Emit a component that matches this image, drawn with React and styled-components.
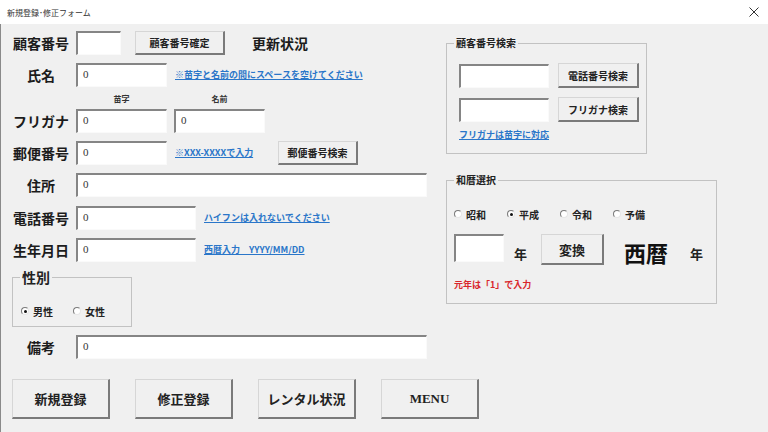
import React from 'react';
import styled, { createGlobalStyle } from 'styled-components';

const GlobalStyle = createGlobalStyle`
  html, body {
    margin: 0;
    padding: 0;
    background: #f0f0f0;
  }
  body {
    font-family: "Liberation Serif", "Noto Sans CJK JP", serif;
    color: #1a1a1a;
  }
  * {
    box-sizing: border-box;
  }
`;

const jp = `"Noto Sans CJK JP", "Liberation Serif", serif`;

const Window = styled.div`
  width: 768px;
  height: 432px;
  background: #f0f0f0;
  display: flex;
  flex-direction: column;
  overflow: hidden;
`;

const TitleBar = styled.div`
  height: 24px;
  flex: none;
  background: #ffffff;
  display: flex;
  align-items: center;
  justify-content: space-between;
  padding: 0 6px 0 7px;
`;

const TitleText = styled.span`
  font-family: ${jp};
  font-size: 8px;
  color: #333;
`;

const CloseButton = styled.span`
  display: flex;
  width: 12px;
  height: 12px;
  align-items: center;
  justify-content: center;
  margin-right: 2px;
`;

const Body = styled.div`
  flex: 1;
  border-left: 1px solid #8a8a8a;
  padding: 7px 12px 0 11px;
`;

const TopSection = styled.div`
  display: flex;
  align-items: flex-start;
`;

const LeftForm = styled.div`
  width: 415px;
  display: flex;
  flex-direction: column;
`;

const Row = styled.div`
  display: flex;
  align-items: center;
  height: ${p => p.$h || 24}px;
  margin-top: ${p => (p.$mt ?? 8)}px;
`;

const Label = styled.span`
  width: 58px;
  margin-right: 6px;
  text-align: center;
  font-family: ${jp};
  font-size: 14px;
  font-weight: 700;
  color: #1c1c1c;
  white-space: nowrap;
`;

const SubLabels = styled.div`
  display: flex;
  align-items: center;
  height: 22px;
  padding-left: 64px;
  gap: 7px;
`;

const SubLabel = styled.span`
  width: 91px;
  text-align: center;
  font-family: ${jp};
  font-size: 8px;
  font-weight: 700;
  color: #333;
`;

const TextBox = styled.div`
  width: ${p => p.$w}px;
  height: ${p => p.$h || 24}px;
  flex: none;
  background: #ffffff;
  border-style: solid;
  border-width: 2px 1px 1px 2px;
  border-color: #858585 #fafafa #fafafa #858585;
  padding: 2px 5px;
  font-family: "Liberation Serif", serif;
  font-size: 11px;
  color: #333;
  line-height: 14px;
`;

const Button = styled.button`
  width: ${p => p.$w}px;
  height: ${p => p.$h || 24}px;
  flex: none;
  margin-left: ${p => p.$ml || 0}px;
  background: #f0f0f0;
  border-style: solid;
  border-width: 1px 2px 2px 1px;
  border-color: #d6d6d6 #7a7a7a #7a7a7a #d6d6d6;
  padding: 0;
  font-family: ${jp};
  font-size: ${p => p.$fs || 10}px;
  font-weight: 700;
  color: #222;
  cursor: default;
`;

const Hint = styled.span`
  margin-left: ${p => p.$ml || 8}px;
  width: ${p => (p.$w ? `${p.$w}px` : 'auto')};
  flex: none;
  font-family: ${jp};
  font-size: 9px;
  font-weight: 700;
  color: #2a76c9;
  text-decoration: underline;
  white-space: nowrap;
  line-height: 12px;
`;

const Status = styled.span`
  margin-left: 27px;
  font-family: ${jp};
  font-size: 14px;
  font-weight: 700;
  color: #1c1c1c;
`;

const Frame = styled.fieldset`
  width: ${p => p.$w}px;
  margin: ${p => p.$m || '0'};
  padding: 0 0 0 7px;
  border: 1px solid #c2c2c2;
  min-width: 0;
`;

const Legend = styled.legend`
  padding: 0 2px;
  font-family: ${jp};
  font-size: ${p => p.$fs || 10}px;
  line-height: ${p => p.$lh || 14}px;
  font-weight: 700;
  color: #222;
`;

const FrameBody = styled.div`
  padding: ${p => p.$pad};
  display: flex;
  flex-direction: column;
`;

const RadioRow = styled.div`
  display: flex;
  align-items: center;
  height: 14px;
`;

const RadioItem = styled.label`
  width: ${p => p.$w}px;
  display: flex;
  align-items: center;
  gap: 4px;
  font-family: ${jp};
  font-size: 10px;
  font-weight: 700;
  color: #222;
`;

const RadioDot = styled.span`
  width: 8px;
  height: 8px;
  border-radius: 50%;
  border: 1px solid;
  border-color: #7a7a7a #e6e6e6 #e6e6e6 #7a7a7a;
  background: #fff;
  display: flex;
  align-items: center;
  justify-content: center;

  &::after {
    content: '';
    width: 3px;
    height: 3px;
    border-radius: 50%;
    background: ${p => (p.$on ? '#111' : 'transparent')};
  }
`;

const RightPanel = styled.div`
  margin-left: 19px;
  margin-top: 5px;
  display: flex;
  flex-direction: column;
`;

const SearchRow = styled.div`
  display: flex;
  align-items: center;
  gap: 9px;
  margin-bottom: ${p => p.$mb || 0}px;
`;

const EraRow = styled.div`
  display: flex;
  align-items: flex-start;
  margin-top: 13px;
`;

const YearMark = styled.span`
  margin-left: ${p => p.$ml}px;
  padding-top: 12px;
  font-family: ${jp};
  font-size: 13px;
  line-height: 16px;
  font-weight: 700;
  color: #222;
`;

const Seireki = styled.span`
  margin-left: 20px;
  margin-top: 5px;
  font-family: ${jp};
  font-size: 22px;
  line-height: 26px;
  font-weight: 700;
  color: #111;
`;

const Note = styled.span`
  margin-top: ${p => p.$mt || 0}px;
  font-family: ${jp};
  font-size: 9px;
  line-height: 12px;
  font-weight: 700;
  color: ${p => p.$color || '#2a76c9'};
  text-decoration: ${p => (p.$link ? 'underline' : 'none')};
  white-space: nowrap;
`;

const ActionBar = styled.div`
  display: flex;
  gap: 25px;
  margin-top: 20px;
`;

const CloseIcon = () => (
  <svg width="10" height="10" viewBox="0 0 10 10">
    <path d="M0.5 0.5 L9.5 9.5 M9.5 0.5 L0.5 9.5" stroke="#333" strokeWidth="1" />
  </svg>
);

const eras = [
  { name: '昭和', on: false },
  { name: '平成', on: true },
  { name: '令和', on: false },
  { name: '予備', on: false },
];

export default function App() {
  return (
    <>
      <GlobalStyle />
      <Window>
        <TitleBar>
          <TitleText>新規登録･修正フォーム</TitleText>
          <CloseButton>
            <CloseIcon />
          </CloseButton>
        </TitleBar>
        <Body>
          <TopSection>
            <LeftForm>
              <Row $mt={0}>
                <Label>顧客番号</Label>
                <TextBox $w={45} />
                <Button $w={90} $ml={14}>顧客番号確定</Button>
                <Status>更新状況</Status>
              </Row>
              <Row>
                <Label>氏名</Label>
                <TextBox $w={91}>0</TextBox>
                <Hint>※苗字と名前の間にスペースを空けてください</Hint>
              </Row>
              <SubLabels>
                <SubLabel>苗字</SubLabel>
                <SubLabel>名前</SubLabel>
              </SubLabels>
              <Row $mt={0}>
                <Label>フリガナ</Label>
                <TextBox $w={91}>0</TextBox>
                <TextBox $w={91} style={{ marginLeft: 7 }}>0</TextBox>
              </Row>
              <Row>
                <Label>郵便番号</Label>
                <TextBox $w={91}>0</TextBox>
                <Hint $w={103}>※XXX-XXXXで入力</Hint>
                <Button $w={80}>郵便番号検索</Button>
              </Row>
              <Row>
                <Label>住所</Label>
                <TextBox $w={351}>0</TextBox>
              </Row>
              <Row $mt={9}>
                <Label>電話番号</Label>
                <TextBox $w={120}>0</TextBox>
                <Hint>ハイフンは入れないでください</Hint>
              </Row>
              <Row>
                <Label>生年月日</Label>
                <TextBox $w={120}>0</TextBox>
                <Hint>西暦入力　YYYY/MM/DD</Hint>
              </Row>
              <Frame $w={120} $m="6px 0 0 0">
                <Legend $fs={14} $lh={18}>性別</Legend>
                <FrameBody $pad="18px 0 8px 1px">
                  <RadioRow>
                    <RadioItem $w={52}>
                      <RadioDot $on />
                      男性
                    </RadioItem>
                    <RadioItem $w={50}>
                      <RadioDot />
                      女性
                    </RadioItem>
                  </RadioRow>
                </FrameBody>
              </Frame>
              <Row>
                <Label>備考</Label>
                <TextBox $w={351}>0</TextBox>
              </Row>
            </LeftForm>

            <RightPanel>
              <Frame $w={201}>
                <Legend>顧客番号検索</Legend>
                <FrameBody $pad="13px 0 12px 5px">
                  <SearchRow $mb={9}>
                    <TextBox $w={90} />
                    <Button $w={81} $h={25}>電話番号検索</Button>
                  </SearchRow>
                  <SearchRow>
                    <TextBox $w={90} />
                    <Button $w={81} $h={25}>フリガナ検索</Button>
                  </SearchRow>
                  <Note $mt={7} $link>フリガナは苗字に対応</Note>
                </FrameBody>
              </Frame>

              <Frame $w={271} $m="19px 0 0 0">
                <Legend>和暦選択</Legend>
                <FrameBody $pad="20px 0 12px 0">
                  <RadioRow>
                    {eras.map(era => (
                      <RadioItem key={era.name} $w={53}>
                        <RadioDot $on={era.on} />
                        {era.name}
                      </RadioItem>
                    ))}
                  </RadioRow>
                  <EraRow>
                    <TextBox $w={50} $h={28} />
                    <YearMark $ml={10}>年</YearMark>
                    <Button $w={63} $h={31} $ml={14} $fs={13}>変換</Button>
                    <Seireki>西暦</Seireki>
                    <YearMark $ml={22}>年</YearMark>
                  </EraRow>
                  <Note $mt={14} $color="#d9262b">元年は「1」で入力</Note>
                </FrameBody>
              </Frame>
            </RightPanel>
          </TopSection>

          <ActionBar>
            <Button $w={98} $h={40} $fs={13}>新規登録</Button>
            <Button $w={98} $h={40} $fs={13}>修正登録</Button>
            <Button $w={98} $h={40} $fs={13}>レンタル状況</Button>
            <Button $w={98} $h={40} $fs={13} style={{ fontFamily: '"Liberation Serif", serif' }}>MENU</Button>
          </ActionBar>
        </Body>
      </Window>
    </>
  );
}
